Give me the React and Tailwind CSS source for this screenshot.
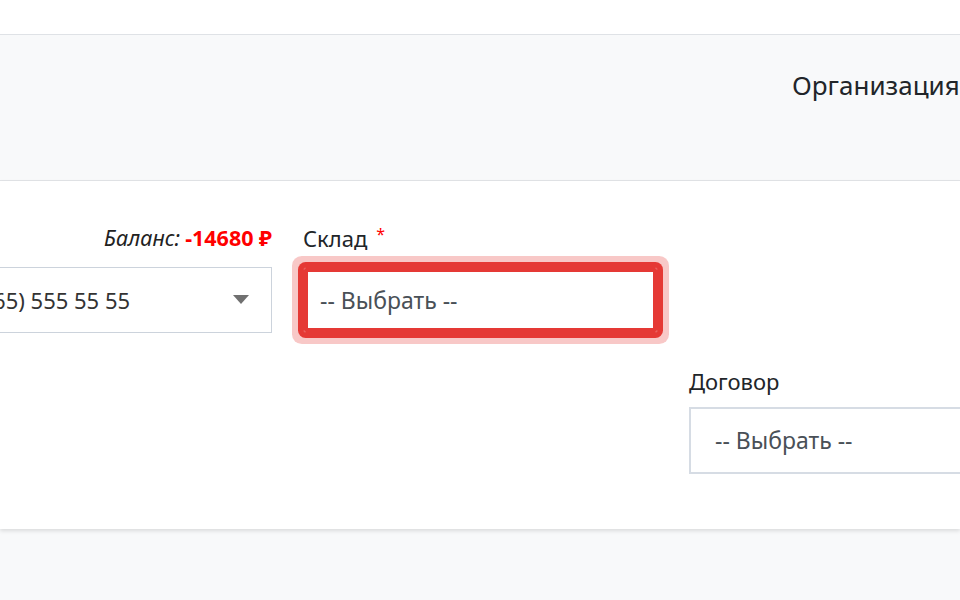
export default function App() {
  const font = { fontFamily: '"Noto Sans", "Open Sans", sans-serif' };
  return (
    <div className="w-[960px] h-[600px] overflow-hidden bg-[#f8f9fa]" style={font}>
      <div className="h-[35px] bg-white border-b border-[#dfe2e6]" />
      <div className="h-[146px] bg-[#f8f9fa] border-b border-[#e2e4e7] pt-[33px] pl-[792px] whitespace-nowrap">
        <span className="text-[26px] leading-[34px] text-[#212529]">Организация</span>
      </div>
      <div className="bg-white shadow-[0_2px_4px_rgba(0,0,0,0.12)] pt-[42px] pb-[55px]">
        <div className="ml-[-83px] grid grid-cols-[355px_355px_355px] gap-x-[31px] w-[1200px]">
          {/* Row 1, col 1 */}
          <div className="flex flex-col">
            <div className="h-[30px] mb-[14px] flex items-center justify-end text-[21.5px] whitespace-nowrap">
              <span className="italic text-[#222]">Баланс:</span>
              <span className="ml-[5px] font-bold text-[#ff0000]">-14680 ₽</span>
            </div>
            <div className="h-[66px] border border-[#ccd3dc] bg-white flex items-center pl-[25px] pr-[22px]">
              <span className="flex-1 text-[22px] text-[#333] whitespace-nowrap">+7 (965) 555 55 55</span>
              <svg width="16" height="10" viewBox="0 0 16 10" className="shrink-0">
                <path d="M0 0 H16 L8 9 Z" fill="#707070" />
              </svg>
            </div>
          </div>
          {/* Row 1, col 2 */}
          <div className="flex flex-col">
            <div className="h-[30px] mb-[14px] flex items-center text-[22px] text-[#212529] whitespace-nowrap">
              <span>Склад</span>
              <span className="ml-[9px] text-[16px] text-[#ff0000] self-start leading-[20px] mt-[1px]">*</span>
            </div>
            <div className="h-[66px] rounded-[3px] border border-[#e53935] bg-white flex items-center pl-[16px] shadow-[inset_0_0_0_4px_#e53935,0_0_0_5px_#e53935,0_0_0_11px_rgba(229,57,53,0.28)]">
              <span className="text-[23px] text-[#495057] whitespace-nowrap">-- Выбрать --</span>
            </div>
          </div>
          <div />
          {/* Row 2 */}
          <div />
          <div />
          <div className="flex flex-col mt-[33px]">
            <div className="h-[30px] mb-[11px] flex items-center text-[22px] text-[#212529] whitespace-nowrap">
              Договор
            </div>
            <div className="h-[67px] border-2 border-[#d6dce4] bg-white flex items-center pl-[24px]">
              <span className="text-[23px] text-[#495057] whitespace-nowrap">-- Выбрать --</span>
            </div>
          </div>
        </div>
      </div>
    </div>
  );
}
